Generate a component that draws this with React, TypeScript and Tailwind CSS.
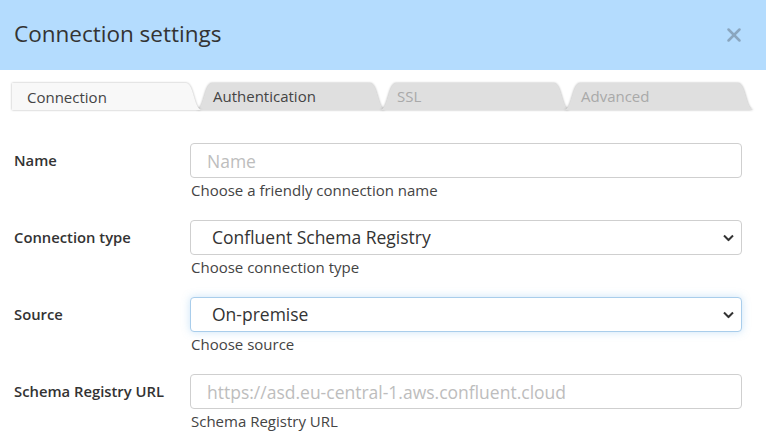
import { X } from 'lucide-react';

type TabProps = {
  label: string;
  active?: boolean;
  first?: boolean;
  disabled?: boolean;
};

function Tab({ label, active, first, disabled }: TabProps) {
  const path = first
    ? 'M0,27 L0,0 L174,0 C182,0 182,27 190,27 Z'
    : 'M0,27 C8,27 8,0 16,0 L174,0 C182,0 182,27 190,27 Z';
  return (
    <div className={`relative w-[190px] h-[27px] shrink-0 ${first ? '' : '-ml-[6px]'} ${active ? 'z-10' : ''}`}>
      <svg className="absolute inset-0 drop-shadow-[0_0_1px_rgba(0,0,0,0.3)]" width="190" height="27" viewBox="0 0 190 27">
        <path d={path} fill={active ? '#f8f8f8' : '#dfdfdf'} />
      </svg>
      <span
        className={`relative block text-[15px] leading-[27px] ${first ? 'pl-[15px] pt-px' : 'pl-[17px]'} ${disabled ? 'text-[#a9a9a9]' : 'text-[#444]'}`}
      >
        {label}
      </span>
    </div>
  );
}

function Chevron() {
  return (
    <svg className="absolute right-[8px] top-1/2 -translate-y-1/2 pointer-events-none" width="11" height="7" viewBox="0 0 11 7">
      <polyline points="1,1 5.5,5.5 10,1" fill="none" stroke="#333" strokeWidth="2" />
    </svg>
  );
}

type FieldProps = {
  label: string;
  help: string;
  children: React.ReactNode;
};

function Field({ label, help, children }: FieldProps) {
  return (
    <div className="grid grid-cols-[176px_1fr] items-start">
      <label className="h-[35px] flex items-center text-[14.8px] font-semibold text-[#333]">{label}</label>
      <div>
        {children}
        <div className="mt-[3px] pl-px text-[15px] leading-[18px] text-[#444]">{help}</div>
      </div>
    </div>
  );
}

function SelectBox({ value, focused }: { value: string; focused?: boolean }) {
  return (
    <div className="relative">
      <select
        defaultValue={value}
        className={`w-full h-[35px] appearance-none rounded-[4px] border bg-white pl-[21px] text-[17.5px] text-[#333] outline-none ${
          focused ? 'border-[#a9cdeb] shadow-[0_0_8px_rgba(102,175,233,0.35)]' : 'border-[#cfcfcf]'
        }`}
      >
        <option>{value}</option>
      </select>
      <Chevron />
    </div>
  );
}

export default function App() {
  return (
    <div className="w-[766px] h-[446px] overflow-hidden bg-white font-['Open_Sans',sans-serif]">
      <header className="h-[70px] bg-[#b4dcfe] flex items-center justify-between pl-[14px] pr-[21px]">
        <h1 className="text-[22.5px] text-[#333] pb-[2px]">Connection settings</h1>
        <X className="w-[22px] h-[22px] text-[#8aa6bf]" strokeWidth={2.75} />
      </header>

      <nav className="mt-[13px] pl-[12px] flex">
        <Tab label="Connection" active first />
        <Tab label="Authentication" />
        <Tab label="SSL" disabled />
        <Tab label="Advanced" disabled />
      </nav>

      <form className="pt-[33px] pl-[14px] pr-[24px] flex flex-col gap-[21px]">
        <Field label="Name" help="Choose a friendly connection name">
          <input
            placeholder="Name"
            className="w-full h-[35px] rounded-[4px] border border-[#cfcfcf] px-[16px] text-[17.5px] text-[#333] placeholder:text-[#bdbdbd] outline-none"
          />
        </Field>
        <Field label="Connection type" help="Choose connection type">
          <SelectBox value="Confluent Schema Registry" />
        </Field>
        <Field label="Source" help="Choose source">
          <SelectBox value="On-premise" focused />
        </Field>
        <Field label="Schema Registry URL" help="Schema Registry URL">
          <input
            placeholder="https://asd.eu-central-1.aws.confluent.cloud"
            className="w-full h-[35px] rounded-[4px] border border-[#cfcfcf] px-[16px] text-[17.5px] text-[#333] placeholder:text-[#bdbdbd] outline-none"
          />
        </Field>
      </form>
    </div>
  );
}
